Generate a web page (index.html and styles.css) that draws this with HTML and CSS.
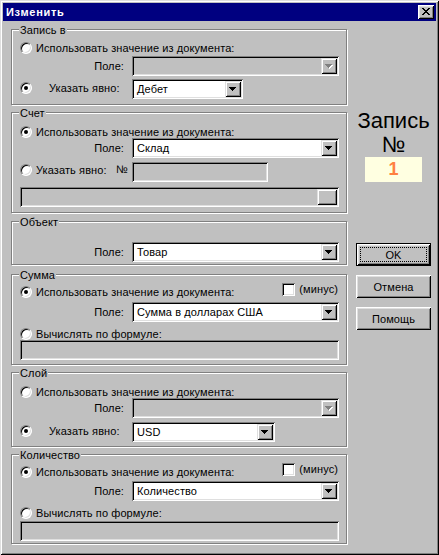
FILE: index.html
```html
<!DOCTYPE html>
<html lang="ru">
<head>
<meta charset="utf-8">
<title>Изменить</title>
<link rel="stylesheet" href="styles.css">
</head>
<body>
<div class="window">
  <div class="titlebar">
    <span class="title">Изменить</span>
    <span class="close"><svg width="16" height="14" viewBox="0 0 16 14" shape-rendering="crispEdges"><path d="M4 3h2v1H4zM10 3h2v1h-2zM5 4h2v1H5zM9 4h2v1H9zM6 5h4v1H6zM7 6h2v1H7zM6 7h4v1H6zM5 8h2v1H5zM9 8h2v1H9zM4 9h2v1H4zM10 9h2v1h-2z" fill="#000"/></svg></span>
  </div>
  <div class="client">
    <div class="left">
      <!-- Запись в -->
      <div class="group g1">
        <div class="legend">Запись в</div>
        <div class="opt mt5"><span class="radio"></span><span class="lbl">Использовать значение из документа:</span></div>
        <div class="field mt2"><span class="fl">Поле:</span><span class="combo full disabled"><span class="cval"></span><span class="cbtn"><svg width="16" height="16" viewBox="0 0 16 16" shape-rendering="crispEdges"><path d="M5 7h7v1H5zM6 8h5v1H6zM7 9h3v1H7zM8 10h1v1H8z" fill="#fff"/><path d="M4 6h7v1H4zM5 7h5v1H5zM6 8h3v1H6zM7 9h1v1H7z" fill="#808080"/></svg></span></span></div>
        <div class="field mt3"><span class="lead"><span class="radio on"></span><span class="lbl far">Указать явно:</span></span><span class="combo w111"><span class="cval">Дебет</span><span class="cbtn"><svg width="16" height="16" viewBox="0 0 16 16" shape-rendering="crispEdges"><path d="M4 6h7v1H4zM5 7h5v1H5zM6 8h3v1H6zM7 9h1v1H7z" fill="#000"/></svg></span></span></div>
      </div>
      <!-- Счет -->
      <div class="group g2">
        <div class="legend">Счет</div>
        <div class="opt mt6"><span class="radio on"></span><span class="lbl">Использовать значение из документа:</span></div>
        <div class="field"><span class="fl">Поле:</span><span class="combo full"><span class="cval">Склад</span><span class="cbtn"><svg width="16" height="16" viewBox="0 0 16 16" shape-rendering="crispEdges"><path d="M4 6h7v1H4zM5 7h5v1H5zM6 8h3v1H6zM7 9h1v1H7z" fill="#000"/></svg></span></span></div>
        <div class="field mt4"><span class="lead up"><span class="radio"></span><span class="lbl">Указать явно:</span><span class="num">№</span></span><span class="edit w136 disabled"></span></div>
        <div class="bar mt5"><span class="cval"></span><span class="bbtn"></span></div>
      </div>
      <!-- Объект -->
      <div class="group g3">
        <div class="legend">Объект</div>
        <div class="field mt13"><span class="fl">Поле:</span><span class="combo full"><span class="cval">Товар</span><span class="cbtn"><svg width="16" height="16" viewBox="0 0 16 16" shape-rendering="crispEdges"><path d="M4 6h7v1H4zM5 7h5v1H5zM6 8h3v1H6zM7 9h1v1H7z" fill="#000"/></svg></span></span></div>
      </div>
      <!-- Сумма -->
      <div class="group g4">
        <div class="legend">Сумма</div>
        <div class="opt chk mt1"><span class="radio on"></span><span class="lbl">Использовать значение из документа:</span><span class="check"></span><span class="minus">(минус)</span></div>
        <div class="field mt4"><span class="fl">Поле:</span><span class="combo full"><span class="cval">Сумма в долларах США</span><span class="cbtn"><svg width="16" height="16" viewBox="0 0 16 16" shape-rendering="crispEdges"><path d="M4 6h7v1H4zM5 7h5v1H5zM6 8h3v1H6zM7 9h1v1H7z" fill="#000"/></svg></span></span></div>
        <div class="opt mt6"><span class="radio"></span><span class="lbl">Вычислять по формуле:</span></div>
        <div class="edit wide disabled"></div>
      </div>
      <!-- Слой -->
      <div class="group g5">
        <div class="legend">Слой</div>
        <div class="opt mt6"><span class="radio"></span><span class="lbl">Использовать значение из документа:</span></div>
        <div class="field"><span class="fl">Поле:</span><span class="combo full disabled"><span class="cval"></span><span class="cbtn"><svg width="16" height="16" viewBox="0 0 16 16" shape-rendering="crispEdges"><path d="M5 7h7v1H5zM6 8h5v1H6zM7 9h3v1H7zM8 10h1v1H8z" fill="#fff"/><path d="M4 6h7v1H4zM5 7h5v1H5zM6 8h3v1H6zM7 9h1v1H7z" fill="#808080"/></svg></span></span></div>
        <div class="field mt4"><span class="lead"><span class="radio on"></span><span class="lbl far">Указать явно:</span></span><span class="combo w143"><span class="cval">USD</span><span class="cbtn"><svg width="16" height="16" viewBox="0 0 16 16" shape-rendering="crispEdges"><path d="M4 6h7v1H4zM5 7h5v1H5zM6 8h3v1H6zM7 9h1v1H7z" fill="#000"/></svg></span></span></div>
      </div>
      <!-- Количество -->
      <div class="group g6">
        <div class="legend">Количество</div>
        <div class="opt chk mt1"><span class="radio on"></span><span class="lbl">Использовать значение из документа:</span><span class="check"></span><span class="minus">(минус)</span></div>
        <div class="field mt3"><span class="fl">Поле:</span><span class="combo full"><span class="cval">Количество</span><span class="cbtn"><svg width="16" height="16" viewBox="0 0 16 16" shape-rendering="crispEdges"><path d="M4 6h7v1H4zM5 7h5v1H5zM6 8h3v1H6zM7 9h1v1H7z" fill="#000"/></svg></span></span></div>
        <div class="opt mt6"><span class="radio"></span><span class="lbl">Вычислять по формуле:</span></div>
        <div class="edit wide disabled mt2"></div>
      </div>
    </div>
    <div class="right">
      <div class="rec-label first">Запись</div>
      <div class="rec-label">№</div>
      <div class="rec-num">1</div>
      <div class="btn default"><span class="focus">OK</span></div>
      <div class="btn">Отмена</div>
      <div class="btn">Помощь</div>
    </div>
  </div>
</div>
</body>
</html>
```
FILE: styles.css
```css
* { box-sizing: border-box; }
html, body { margin: 0; padding: 0; }
body {
  width: 439px; height: 555px;
  font-family: "Liberation Sans", Arial, sans-serif;
  font-size: 11px; letter-spacing: 0.1px; color: #000; background: #c0c0c0;
}
.window {
  width: 439px; height: 555px; padding: 3px; background: #c0c0c0;
  box-shadow: inset 1px 1px 0 #dfdfdf, inset -1px -1px 0 #000, inset 2px 2px 0 #fff, inset -2px -2px 0 #808080;
}
.titlebar {
  height: 18px; background: #000080;
  display: flex; align-items: center; justify-content: space-between;
  padding: 0 2px 0 3px;
}
.title { color: #fff; font-weight: bold; font-size: 11px; line-height: 18px; letter-spacing: 0.7px; }
.close {
  width: 16px; height: 14px; display: flex; background: #c0c0c0;
  box-shadow: inset 1px 1px 0 #fff, inset -1px -1px 0 #000, inset 2px 2px 0 #dfdfdf, inset -2px -2px 0 #808080;
}
.client { display: flex; padding-left: 8px; }
.left { width: 337px; }

.group {
  width: 336px;
  border: 1px solid #808080;
  box-shadow: inset 1px 1px 0 #fff, 1px 1px 0 #fff;
  padding: 0 7px 0 8px;
}
.g1 { margin-top: 8px; height: 76px; }
.g2 { margin-top: 7px; height: 101px; }
.g3 { margin-top: 8px; height: 44px; }
.g4 { margin-top: 9px; height: 91px; }
.g5 { margin-top: 7px; height: 75px; }
.g6 { margin-top: 7px; height: 90px; }

.legend {
  width: max-content; height: 13px; line-height: 13px;
  margin: -6px 0 0 -1px; padding: 0 1px; background: #c0c0c0;
}
.mt0 { margin-top: 0; }
.mt1 { margin-top: 1px; }
.mt2 { margin-top: 2px; }
.mt3 { margin-top: 3px; }
.mt4 { margin-top: 4px; }
.mt5 { margin-top: 5px; }
.mt6 { margin-top: 6px; }
.mt13 { margin-top: 13px; }

.opt { display: flex; align-items: flex-start; height: 12px; }
.opt .lbl { line-height: 12px; margin-left: 4px; white-space: nowrap; }
.opt.chk { height: 15px; }
.opt.chk .radio { margin-top: 3px; }
.opt.chk .lbl { margin-top: 3px; }
.check {
  width: 13px; height: 13px; margin-left: auto; background: #fff; flex: none;
  box-shadow: inset 1px 1px 0 #808080, inset -1px -1px 0 #fff, inset 2px 2px 0 #000, inset -2px -2px 0 #dfdfdf;
}
.minus { line-height: 13px; margin-left: 4px; margin-right: 1px; }

.radio {
  width: 12px; height: 12px; flex: none; border-radius: 50%; background: #fff;
  border: 1px solid; border-color: #808080 #fff #fff #808080;
  box-shadow: inset 1px 1px 0 #000, inset -1px -1px 0 #dfdfdf;
  display: flex; align-items: center; justify-content: center;
}
.radio.on::after { content: ""; width: 4px; height: 4px; border-radius: 50%; background: #000; }

.field { display: flex; align-items: flex-start; height: 20px; }
.fl { width: 104px; margin-right: 8px; text-align: right; line-height: 20px; }
.lead { width: 112px; display: flex; align-items: flex-start; }
.lead .radio { margin-top: 3px; }
.lead .lbl { line-height: 12px; margin-top: 3px; margin-left: 4px; white-space: nowrap; }
.lead .lbl.far { margin-left: 17px; }
.lead.up .radio { margin-top: 2px; }
.lead.up .lbl { margin-top: 2px; }
.num { line-height: 12px; margin-top: 1px; margin-left: auto; margin-right: 4px; }

.combo, .edit, .bar {
  display: flex; height: 20px; padding: 2px; background: #fff;
  box-shadow: inset 1px 1px 0 #808080, inset -1px -1px 0 #fff, inset 2px 2px 0 #000, inset -2px -2px 0 #dfdfdf;
}
.combo.full { width: 207px; }
.w111 { width: 111px; }
.w143 { width: 143px; }
.w136 { width: 136px; }
.edit.wide, .bar { width: 319px; }
.disabled, .bar { background: #c0c0c0; }
.cval { flex: 1; line-height: 16px; padding-left: 3px; white-space: nowrap; overflow: hidden; }
.cbtn, .bbtn {
  flex: none; width: 16px; height: 16px; display: flex; background: #c0c0c0;
  box-shadow: inset 1px 1px 0 #dfdfdf, inset -1px -1px 0 #000, inset 2px 2px 0 #fff, inset -2px -2px 0 #808080;
}
.bbtn { width: 20px; }

.right {
  width: 75px; margin-left: 8px;
  display: flex; flex-direction: column; align-items: center;
}
.rec-label { font-size: 22px; line-height: 24px; letter-spacing: 0; }
.rec-label.first { margin-top: 88px; }
.rec-num {
  width: 57px; height: 25px; background: #ffffe1; color: #ff8040;
  font-weight: bold; font-size: 18px; line-height: 25px; text-align: center;
}
.btn {
  width: 75px; height: 23px; margin-top: 9px;
  display: flex; align-items: center; justify-content: center;
  box-shadow: inset 1px 1px 0 #fff, inset -1px -1px 0 #000, inset 2px 2px 0 #dfdfdf, inset -2px -2px 0 #808080;
}
.btn.default { margin-top: 61px; border: 1px solid #000; padding: 3px; }
.focus {
  align-self: stretch; flex: 1; border: 1px dotted #000;
  display: flex; align-items: center; justify-content: center;
}
```
